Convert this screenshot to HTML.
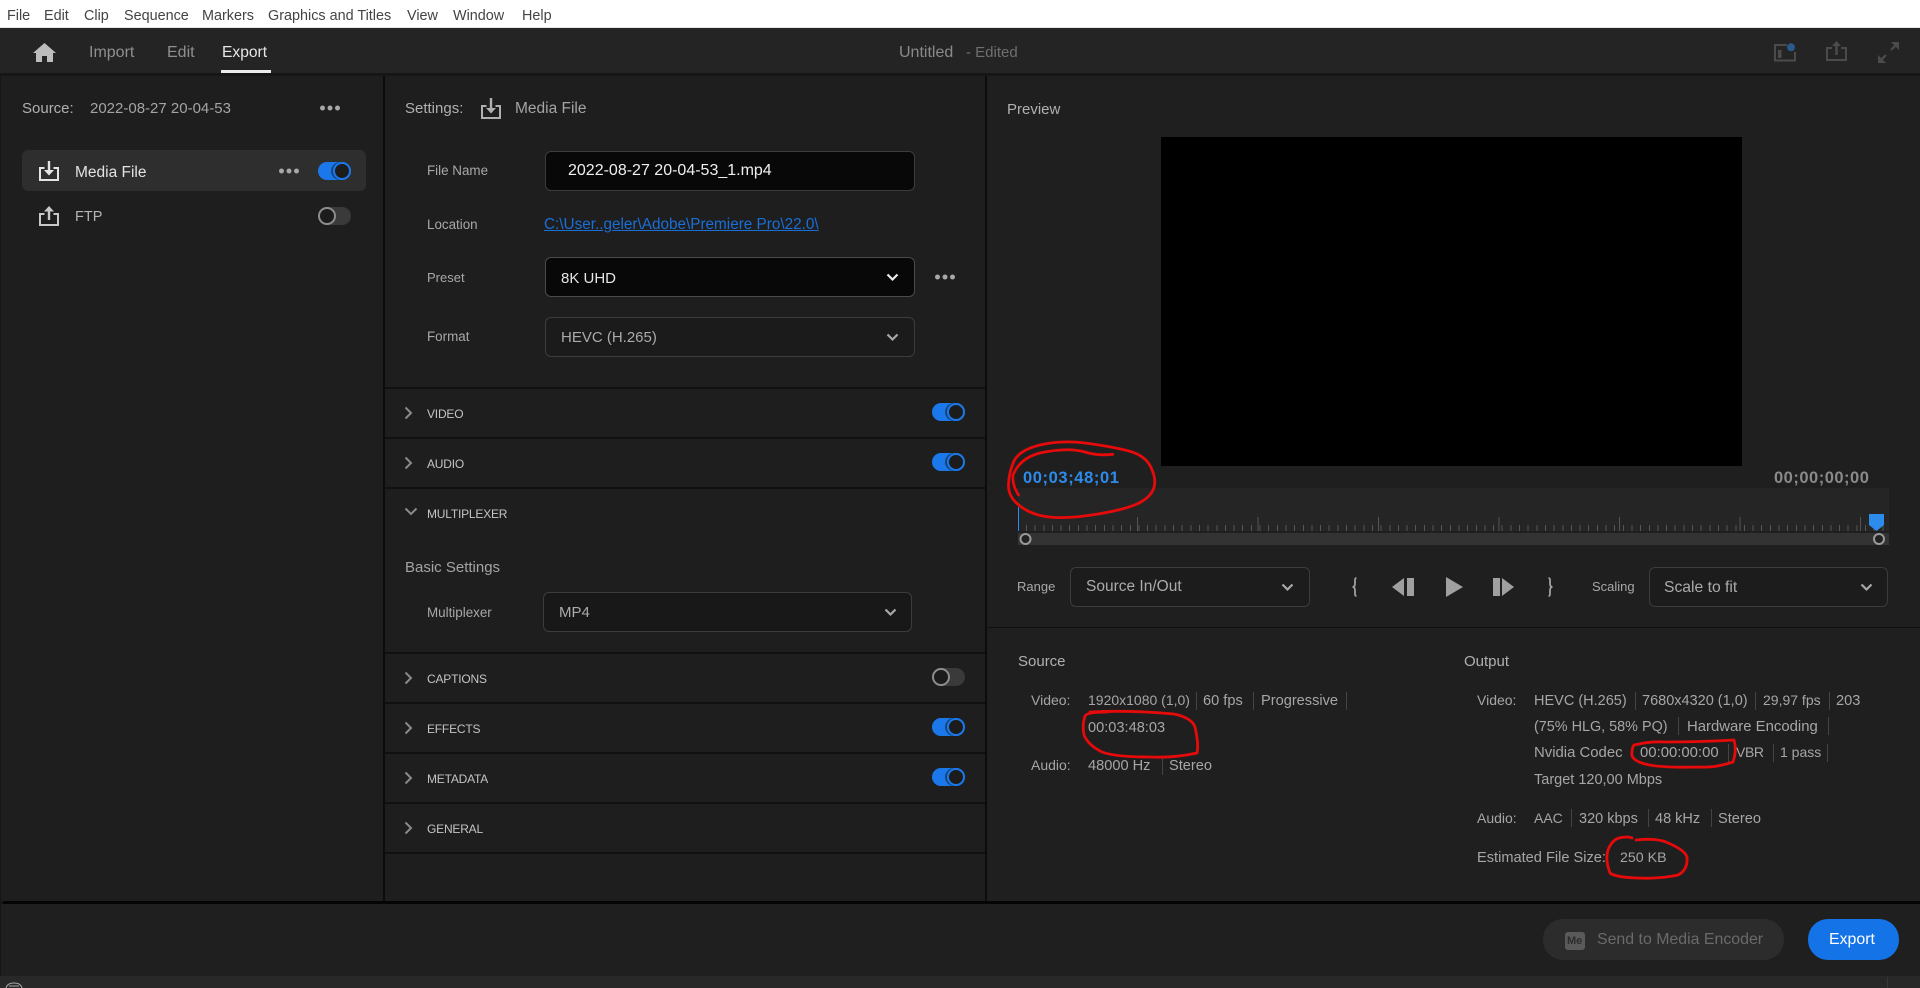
<!DOCTYPE html>
<html><head><meta charset="utf-8"><title>Export</title>
<style>
html,body{margin:0;padding:0;width:1920px;height:988px;overflow:hidden;background:#161616}
body{position:relative;font-family:"Liberation Sans",sans-serif;color:#b5b5b5}
.a{position:absolute}
.t{position:absolute;white-space:nowrap;line-height:20px;height:20px}
.m{color:#444;font-size:14.4px}
.l{font-size:13.4px;color:#a8a8a8}
.h{font-size:15px;color:#b0b0b0}
.s{font-size:15px;color:#a6a6a6}
.u{font-size:12px;color:#c4c4c4;letter-spacing:-.2px}
.sep{position:absolute;width:1px;height:18px;background:#444}
.sel{position:absolute;box-sizing:border-box;border:1px solid #3c3c3c;border-radius:6px;background:#1b1b1b}
.tog{position:absolute;width:33px;height:18px;border-radius:9px;background:#1b78ea}
.tog:after{content:"";position:absolute;right:0;top:0;width:18px;height:18px;box-sizing:border-box;border:2.5px solid #1b78ea;border-radius:50%;background:#1c1c1c;box-shadow:-2px 0 0 #15457f}
.tog.off{background:#3a3a3a}
.tog.off:after{right:auto;left:0;border-color:#8d8d8d;box-shadow:none}
.dots{position:absolute;width:20px;height:6px;background:radial-gradient(circle at 2.5px 3px,#a8a8a8 2.2px,transparent 2.7px),radial-gradient(circle at 10px 3px,#a8a8a8 2.2px,transparent 2.7px),radial-gradient(circle at 17.5px 3px,#a8a8a8 2.2px,transparent 2.7px)}
svg{position:absolute;overflow:visible}
.ln{position:absolute;background:#111}
</style></head><body>
<!-- menu bar -->
<div class="a" style="left:0;top:0;width:1920px;height:27px;background:#fff"></div>
<div class="a" style="left:0;top:27px;width:1920px;height:1px;background:#e8e8e8"></div>
<div class="t m" style="left:7px;top:6px">File</div>
<div class="t m" style="left:44px;top:6px">Edit</div>
<div class="t m" style="left:84px;top:6px">Clip</div>
<div class="t m" style="left:124px;top:6px">Sequence</div>
<div class="t m" style="left:202px;top:6px">Markers</div>
<div class="t m" style="left:268px;top:6px">Graphics and Titles</div>
<div class="t m" style="left:407px;top:6px">View</div>
<div class="t m" style="left:453px;top:6px">Window</div>
<div class="t m" style="left:522px;top:6px">Help</div>
<!-- top bar -->
<div class="a" style="left:0;top:28px;width:1920px;height:45px;background:#242424"></div>
<svg style="left:33px;top:43px" width="23" height="19" viewBox="0 0 23 19"><path d="M11.5 0L23 10h-3v9h-6v-6H9v6H3v-9H0z" fill="#bdbdbd"/></svg>
<div class="t" style="left:89px;top:43px;font-size:16px;color:#8f8f8f">Import</div>
<div class="t" style="left:167px;top:43px;font-size:16px;color:#8f8f8f">Edit</div>
<div class="t" style="left:222px;top:43px;font-size:15.6px;color:#e6e6e6">Export</div>
<div class="a" style="left:221px;top:70px;width:50px;height:3px;background:#ececec"></div>
<div class="t" style="left:899px;top:43px;font-size:16px;color:#8a8a8a">Untitled</div>
<div class="t" style="left:966px;top:43px;font-size:15px;color:#6f6f6f">- Edited</div>
<svg style="left:1774px;top:43px" width="22" height="19" viewBox="0 0 22 19"><path d="M13 2H1v15.5h20V9" fill="none" stroke="#4b4b4b" stroke-width="2"/><rect x="4" y="7" width="3.500" height="8" fill="#4b4b4b"/><circle cx="17" cy="4.300" r="4" fill="#2a5a8c"/></svg>
<svg style="left:1826px;top:41px" width="21" height="20" viewBox="0 0 21 20"><path d="M6 7H1v12h19V7h-5" fill="none" stroke="#4b4b4b" stroke-width="2"/><path d="M10.500 3v11" stroke="#4b4b4b" stroke-width="2.500"/><path d="M10.500 0L15 5H6z" fill="#4b4b4b"/></svg>
<svg style="left:1878px;top:42px" width="21" height="21" viewBox="0 0 21 21"><path d="M3 18l5-5M13 8l5-5" stroke="#4b4b4b" stroke-width="2.200"/><path d="M13 0h8v8zM0 13v8h8z" fill="#4b4b4b"/></svg>
<!-- panels -->
<div class="a" style="left:1px;top:76px;width:382px;height:825px;background:#1e1e1e"></div>
<div class="a" style="left:385px;top:76px;width:600px;height:825px;background:#1e1e1e"></div>
<div class="a" style="left:987px;top:76px;width:933px;height:825px;background:#1f1f1f"></div>
<div class="a" style="left:1px;top:904px;width:1919px;height:72px;background:#1f1f1f"></div>
<div class="a" style="left:0;top:976px;width:1920px;height:12px;background:#282828"></div>
<div class="a" style="left:1887px;top:977px;width:1px;height:11px;background:#383838"></div>
<svg style="left:5px;top:983px" width="18" height="5" viewBox="0 0 18 5"><path d="M1 5C2 1 6 0 9 0s7 1 8 5M4 3h10" fill="none" stroke="#aaa" stroke-width="1"/></svg>
<!-- left panel -->
<div class="t h" style="left:22px;top:99px">Source:</div>
<div class="t h" style="left:90px;top:99px;color:#a4a4a4">2022-08-27 20-04-53</div>
<div class="dots" style="left:320px;top:105px"></div>
<div class="a" style="left:22px;top:150px;width:344px;height:41px;background:#2e2e2e;border-radius:6px"></div>
<svg style="left:39px;top:161px" width="20" height="20" viewBox="0 0 20 20"><path d="M5.500 7H1v12h18V7h-4.500" fill="none" stroke="#e4e4e4" stroke-width="2"/><path d="M10 0v10" stroke="#e4e4e4" stroke-width="2.400"/><path d="M5 9h10l-5 5.500z" fill="#e4e4e4"/></svg>
<div class="t" style="left:75px;top:163px;font-size:15.500px;color:#e2e2e2">Media File</div>
<div class="dots" style="left:279px;top:168px"></div>
<div class="tog" style="left:318px;top:162px"></div>
<svg style="left:39px;top:206px" width="20" height="20" viewBox="0 0 20 20"><path d="M5.500 8H1v11h18V8h-4.500" fill="none" stroke="#c8c8c8" stroke-width="2"/><path d="M10 4v10" stroke="#c8c8c8" stroke-width="2.400"/><path d="M10 0l5 5.500H5z" fill="#c8c8c8"/></svg>
<div class="t" style="left:75px;top:207px;font-size:14.500px;color:#b4b4b4">FTP</div>
<div class="tog off" style="left:318px;top:207px"></div>
<!-- settings panel -->
<div class="t h" style="left:405px;top:99px">Settings:</div>
<svg style="left:481px;top:98px" width="20" height="21" viewBox="0 0 20 21"><path d="M5.500 8H1v12h18V8h-4.500" fill="none" stroke="#b0b0b0" stroke-width="2"/><path d="M10 0v11" stroke="#b0b0b0" stroke-width="2.400"/><path d="M5 10h10l-5 5.500z" fill="#b0b0b0"/></svg>
<div class="t h" style="left:515px;top:99px;color:#a4a4a4;font-size:15.500px">Media File</div>
<div class="t l" style="left:427px;top:161px">File Name</div>
<div class="sel" style="left:545px;top:151px;width:370px;height:40px;background:#080808"></div>
<div class="t" style="left:568px;top:161px;font-size:16px;color:#f0f0f0">2022-08-27 20-04-53_1.mp4</div>
<div class="t l" style="left:427px;top:215px">Location</div>
<div class="t" style="left:544px;top:215px;font-size:15.300px;color:#1a6fd6;text-decoration:underline">C:\User..geler\Adobe\Premiere Pro\22.0\</div>
<div class="t l" style="left:427px;top:268px;font-size:13px">Preset</div>
<div class="sel" style="left:545px;top:257px;width:370px;height:40px;background:#080808;border-color:#4a4a4a"></div>
<div class="t" style="left:561px;top:269px;font-size:15px;color:#e6e6e6">8K UHD</div>
<svg style="left:886px;top:273px" width="13" height="8" viewBox="0 0 13 8"><path d="M1.500 1.500l5 5 5-5" fill="none" stroke="#eee" stroke-width="2.200"/></svg>
<div class="dots" style="left:935px;top:274px"></div>
<div class="t l" style="left:427px;top:327px">Format</div>
<div class="sel" style="left:545px;top:317px;width:370px;height:40px"></div>
<div class="t" style="left:561px;top:328px;font-size:15px;color:#ababab">HEVC (H.265)</div>
<svg style="left:886px;top:333px" width="13" height="8" viewBox="0 0 13 8"><path d="M1.500 1.500l5 5 5-5" fill="none" stroke="#a8a8a8" stroke-width="2.200"/></svg>
<!-- section lines -->
<div class="ln" style="left:385px;top:387px;width:600px;height:2px"></div>
<div class="ln" style="left:385px;top:437px;width:600px;height:2px"></div>
<div class="ln" style="left:385px;top:487px;width:600px;height:2px"></div>
<div class="ln" style="left:385px;top:652px;width:600px;height:2px"></div>
<div class="ln" style="left:385px;top:702px;width:600px;height:2px"></div>
<div class="ln" style="left:385px;top:752px;width:600px;height:2px"></div>
<div class="ln" style="left:385px;top:802px;width:600px;height:2px"></div>
<div class="ln" style="left:385px;top:852px;width:600px;height:2px"></div>
<svg style="left:404px;top:406px" width="9" height="14" viewBox="0 0 9 14"><path d="M1.500 1.500l5.500 5.500-5.500 5.500" fill="none" stroke="#8a8a8a" stroke-width="2"/></svg>
<div class="t u" style="left:427px;top:404px">VIDEO</div>
<div class="tog" style="left:932px;top:403px"></div>
<svg style="left:404px;top:456px" width="9" height="14" viewBox="0 0 9 14"><path d="M1.500 1.500l5.500 5.500-5.500 5.500" fill="none" stroke="#8a8a8a" stroke-width="2"/></svg>
<div class="t u" style="left:427px;top:454px">AUDIO</div>
<div class="tog" style="left:932px;top:453px"></div>
<svg style="left:404px;top:507px" width="14" height="9" viewBox="0 0 14 9"><path d="M1.500 1.500l5.500 5.500 5.500-5.500" fill="none" stroke="#8a8a8a" stroke-width="2"/></svg>
<div class="t u" style="left:427px;top:504px">MULTIPLEXER</div>
<div class="t h" style="left:405px;top:558px;color:#a4a4a4">Basic Settings</div>
<div class="t l" style="left:427px;top:603px">Multiplexer</div>
<div class="sel" style="left:543px;top:592px;width:369px;height:40px;background:#181818"></div>
<div class="t" style="left:559px;top:603px;font-size:15px;color:#ababab">MP4</div>
<svg style="left:884px;top:608px" width="13" height="8" viewBox="0 0 13 8"><path d="M1.500 1.500l5 5 5-5" fill="none" stroke="#a8a8a8" stroke-width="2.200"/></svg>
<svg style="left:404px;top:671px" width="9" height="14" viewBox="0 0 9 14"><path d="M1.500 1.500l5.500 5.500-5.500 5.500" fill="none" stroke="#8a8a8a" stroke-width="2"/></svg>
<div class="t u" style="left:427px;top:669px">CAPTIONS</div>
<div class="tog off" style="left:932px;top:668px"></div>
<svg style="left:404px;top:721px" width="9" height="14" viewBox="0 0 9 14"><path d="M1.500 1.500l5.500 5.500-5.500 5.500" fill="none" stroke="#8a8a8a" stroke-width="2"/></svg>
<div class="t u" style="left:427px;top:719px">EFFECTS</div>
<div class="tog" style="left:932px;top:718px"></div>
<svg style="left:404px;top:771px" width="9" height="14" viewBox="0 0 9 14"><path d="M1.500 1.500l5.500 5.500-5.500 5.500" fill="none" stroke="#8a8a8a" stroke-width="2"/></svg>
<div class="t u" style="left:427px;top:769px">METADATA</div>
<div class="tog" style="left:932px;top:768px"></div>
<svg style="left:404px;top:821px" width="9" height="14" viewBox="0 0 9 14"><path d="M1.500 1.500l5.500 5.500-5.500 5.500" fill="none" stroke="#8a8a8a" stroke-width="2"/></svg>
<div class="t u" style="left:427px;top:819px">GENERAL</div>
<!-- preview -->
<div class="t h" style="left:1007px;top:100px;font-size:15px">Preview</div>
<div class="a" style="left:1161px;top:137px;width:581px;height:329px;background:#000"></div>
<div class="t" style="left:1023px;top:468px;font-size:16.500px;font-weight:bold;color:#2d8ceb;letter-spacing:.6px">00;03;48;01</div>
<div class="t" style="left:1774px;top:468px;font-size:16.500px;font-weight:bold;color:#8a8a8a;letter-spacing:.5px">00;00;00;00</div>
<div class="a" style="left:1018px;top:488px;width:871px;height:43px;background:#252525"></div>
<div class="a" style="left:1026px;top:525px;width:860px;height:6px;background:repeating-linear-gradient(90deg,#555 0,#555 1px,transparent 1px,transparent 8.65px)"></div>
<div class="a" style="left:1137px;top:517px;width:740px;height:14px;background:repeating-linear-gradient(90deg,#555 0,#555 1px,transparent 1px,transparent 120.5px)"></div>
<div class="a" style="left:1018px;top:507px;width:1px;height:24px;background:#2d8ceb"></div>
<div class="a" style="left:1018px;top:533px;width:871px;height:12px;background:#333"></div>
<svg style="left:1869px;top:514px" width="15" height="17" viewBox="0 0 15 17"><path d="M0 0h15v11l-7.500 6L0 11z" fill="#2d8ceb"/></svg>
<svg style="left:1018px;top:531px" width="870" height="16" viewBox="0 0 870 16"><circle cx="7.500" cy="8" r="5" fill="#222" stroke="#9a9a9a" stroke-width="2"/><circle cx="861" cy="8" r="5" fill="#222" stroke="#9a9a9a" stroke-width="2"/></svg>
<!-- transport -->
<div class="t l" style="left:1017px;top:577px;font-size:13px">Range</div>
<div class="sel" style="left:1070px;top:567px;width:240px;height:40px;background:#1c1c1c"></div>
<div class="t" style="left:1086px;top:577px;font-size:15.500px;color:#ababab">Source In/Out</div>
<svg style="left:1281px;top:583px" width="13" height="8" viewBox="0 0 13 8"><path d="M1.500 1.500l5 5 5-5" fill="none" stroke="#a8a8a8" stroke-width="2.200"/></svg>
<svg style="left:1351px;top:577px" width="8" height="20" viewBox="0 0 8 20"><path d="M5.500 1C3.500 1 4 4 4 6.500 4 8.500 3.500 10 1.500 10 3.500 10 4 11.500 4 13.500 4 16 3.500 19 5.500 19" fill="none" stroke="#a0a0a0" stroke-width="1.800"/></svg>
<svg style="left:1392px;top:577px" width="23" height="20" viewBox="0 0 23 20"><path d="M12 1v18L0 10z" fill="#a0a0a0"/><rect x="15" y="1" width="7" height="18" fill="#a0a0a0"/></svg>
<svg style="left:1445px;top:577px" width="19" height="20" viewBox="0 0 19 20"><path d="M1 0v20l17-10z" fill="#a0a0a0"/></svg>
<svg style="left:1492px;top:577px" width="22" height="20" viewBox="0 0 22 20"><rect x="1" y="1" width="7" height="18" fill="#a0a0a0"/><path d="M10 1v18l12-9z" fill="#a0a0a0"/></svg>
<svg style="left:1546px;top:577px" width="8" height="20" viewBox="0 0 8 20"><path d="M2.500 1C4.500 1 4 4 4 6.500 4 8.500 4.500 10 6.500 10 4.500 10 4 11.500 4 13.500 4 16 4.500 19 2.500 19" fill="none" stroke="#a0a0a0" stroke-width="1.800"/></svg>
<div class="t l" style="left:1592px;top:577px;font-size:13px">Scaling</div>
<div class="sel" style="left:1649px;top:567px;width:239px;height:40px;background:#1c1c1c"></div>
<div class="t" style="left:1664px;top:578px;font-size:15.700px;color:#ababab">Scale to fit</div>
<svg style="left:1860px;top:583px" width="13" height="8" viewBox="0 0 13 8"><path d="M1.500 1.500l5 5 5-5" fill="none" stroke="#a8a8a8" stroke-width="2.200"/></svg>
<div class="a" style="left:987px;top:627px;width:933px;height:1px;background:#0f0f0f"></div>
<!-- source info -->
<div class="t h" style="left:1018px;top:652px">Source</div>
<div class="t s" style="left:1031px;top:690px;font-size:14px">Video:</div>
<div class="t s" style="left:1088px;top:690px;font-size:14px">1920x1080 (1,0)</div><div class="sep" style="left:1196px;top:692px"></div>
<div class="t s" style="left:1203px;top:691px;font-size:14.600px">60 fps</div><div class="sep" style="left:1253px;top:692px"></div>
<div class="t s" style="left:1261px;top:691px;font-size:14.600px">Progressive</div><div class="sep" style="left:1346px;top:692px"></div>
<div class="t s" style="left:1088px;top:718px;font-size:14.600px">00:03:48:03</div>
<div class="t s" style="left:1031px;top:755px;font-size:14px">Audio:</div>
<div class="t s" style="left:1088px;top:756px;font-size:14.600px">48000 Hz</div><div class="sep" style="left:1162px;top:757px"></div>
<div class="t s" style="left:1169px;top:756px;font-size:14.600px">Stereo</div>
<!-- output info -->
<div class="t h" style="left:1464px;top:652px">Output</div>
<div class="t s" style="left:1477px;top:690px;font-size:14px">Video:</div>
<div class="t s" style="left:1534px;top:691px;font-size:14.500px">HEVC (H.265)</div><div class="sep" style="left:1635px;top:692px"></div>
<div class="t s" style="left:1642px;top:691px;font-size:14.500px">7680x4320 (1,0)</div><div class="sep" style="left:1755px;top:692px"></div>
<div class="t s" style="left:1763px;top:690px;font-size:14px">29,97 fps</div><div class="sep" style="left:1829px;top:692px"></div>
<div class="t s" style="left:1836px;top:691px;font-size:14.600px">203</div>
<div class="t s" style="left:1534px;top:717px;font-size:14.400px">(75% HLG, 58% PQ)</div><div class="sep" style="left:1678px;top:717px"></div>
<div class="t s" style="left:1687px;top:717px;font-size:14.900px">Hardware Encoding</div><div class="sep" style="left:1828px;top:717px"></div>
<div class="t s" style="left:1534px;top:743px;font-size:14.900px">Nvidia Codec</div>
<div class="t s" style="left:1640px;top:743px;font-size:14.900px">00:00:00:00</div><div class="sep" style="left:1728px;top:744px"></div>
<div class="t s" style="left:1736px;top:742px;font-size:14px;letter-spacing:-.4px">VBR</div><div class="sep" style="left:1773px;top:744px"></div>
<div class="t s" style="left:1780px;top:742px;font-size:14px">1 pass</div><div class="sep" style="left:1827px;top:744px"></div>
<div class="t s" style="left:1534px;top:770px;font-size:14.500px">Target 120,00 Mbps</div>
<div class="t s" style="left:1477px;top:808px;font-size:14px">Audio:</div>
<div class="t s" style="left:1534px;top:808px;font-size:14px">AAC</div><div class="sep" style="left:1571px;top:809px"></div>
<div class="t s" style="left:1579px;top:809px;font-size:14.500px">320 kbps</div><div class="sep" style="left:1648px;top:809px"></div>
<div class="t s" style="left:1655px;top:809px;font-size:14.500px">48 kHz</div><div class="sep" style="left:1711px;top:809px"></div>
<div class="t s" style="left:1718px;top:809px;font-size:14.600px">Stereo</div>
<div class="t s" style="left:1477px;top:848px;font-size:14.600px">Estimated File Size:</div>
<div class="t s" style="left:1620px;top:848px;font-size:14.200px">250 KB</div>
<!-- dividers -->
<div class="a" style="left:383px;top:76px;width:2px;height:828px;background:#0c0c0c"></div>
<div class="a" style="left:985px;top:76px;width:2px;height:828px;background:#0c0c0c"></div>
<div class="a" style="left:3px;top:901px;width:1917px;height:3px;background:#050505"></div>
<!-- footer buttons -->
<div class="a" style="left:1543px;top:919px;width:241px;height:41px;border-radius:20px;background:#2c2c2c"></div>
<div class="a" style="left:1565px;top:932px;width:20px;height:18px;border-radius:3px;background:#5a5a5a"></div>
<div class="t" style="left:1567px;top:931px;font-size:11px;font-weight:bold;color:#2c2c2c">Me</div>
<div class="t" style="left:1597px;top:930px;font-size:15.900px;color:#6a6a6a">Send to Media Encoder</div>
<div class="a" style="left:1808px;top:919px;width:91px;height:41px;border-radius:20px;background:#1473e6"></div>
<div class="t" style="left:1829px;top:930px;font-size:15.900px;color:#fff">Export</div>
<!-- red annotations -->
<svg style="left:0;top:0;pointer-events:none" width="1920" height="988" viewBox="0 0 1920 988">
<g fill="none" stroke="#e60a0a" stroke-width="2.800" stroke-linecap="round" stroke-linejoin="round">
<path d="M1085 443Q1108.600 446 1127 450.500Q1145.400 455 1151 467.500Q1157 480 1153.500 489Q1150 498 1137 504Q1123.500 510 1095 514.500Q1067 519 1049 517Q1031.500 515 1020 506Q1008 497 1008.500 484.500Q1009 472 1014 461Q1019.600 450 1040 445Q1061 440 1085 443"/>
<path d="M1112.800 454.300Q1097 456 1085 452Q1067 447 1040 453Q1020 458 1013 475Q1012 485 1018.500 495"/>
<path d="M1090 712Q1130 710 1174 714Q1192 718 1195 727Q1199 745 1197 753Q1175 758 1150 757Q1115 757 1102 752Q1088 745 1084 735Q1082 725 1085 716Q1087 712 1108 712"/>
<path d="M1634 745Q1650 741 1665 742Q1700 742 1734 740Q1737 750 1733 762Q1715 768 1700 767Q1660 768 1645 764Q1630 760 1632 752Q1632 748 1634 745"/>
<path d="M1619 838Q1628 836 1632 838M1636 840Q1655 838 1666 842Q1685 850 1687 857Q1688 870 1678 875Q1660 879 1636 878Q1615 877 1610 873Q1605 860 1608 850Q1612 840 1619 838"/>
</g></svg>
</body></html>
